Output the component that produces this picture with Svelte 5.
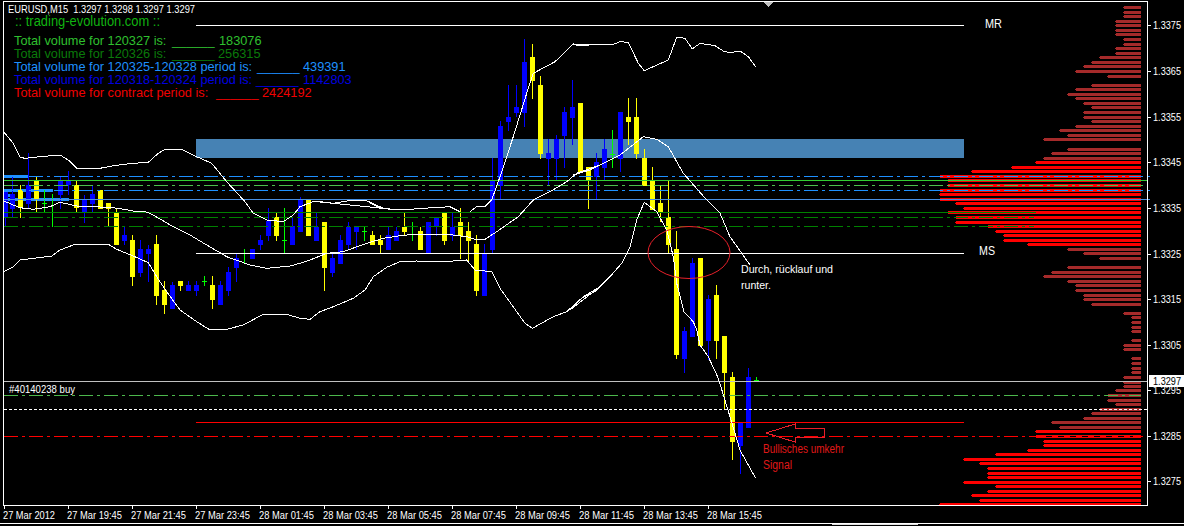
<script>
  // Candle rows: centre x, colour (b/y/g), wick top, wick bottom, body top, body bottom. Real pixels.
  const z2 = (x, c, wt, wb, bt, bb) => [x, c, 130 + wt / 3, 130 + wb / 3, bt == null ? null : 130 + bt / 3, bb == null ? null : 130 + bb / 3];
  const z3 = (x, c, wt, wb, bt, bb) => [x, c, 30 + wt / 3, 30 + wb / 3, bt == null ? null : 30 + bt / 3, bb == null ? null : 30 + bb / 3];

  const raw = [
    z2(5, 'b', 185, 290, 185, 260), z2(12, 'b', 140, 262, 192, 237), z2(20, 'y', 166, 263, 181, 235), z2(28, 'b', 70, 238, 166, 221),
    z2(36, 'y', 140, 245, 153, 208), z2(44, 'g', 180, 245, 219, 219), z2(52, 'g', 192, 290, null, null), z2(60, 'b', 140, 237, 154, 195),
    z2(68, 'b', 123, 195, 153, 166), z2(76, 'y', 153, 245, 166, 235), z2(84, 'b', 195, 278, 208, 245), z2(92, 'b', 166, 245, 192, 221),
    z2(100, 'y', 181, 236, 181, 236), z2(108, 'y', 219, 288, 219, 236), z2(116, 'y', 235, 345, 249, 345), z2(124, 'b', 292, 346, 316, 333),
    z2(132, 'y', 316, 467, 330, 440), z2(140, 'b', 330, 440, 358, 430), z2(148, 'b', 345, 455, 358, 372), z2(156, 'y', 316, 525, 342, 497),
    z2(164, 'y', 453, 551, 480, 525), z2(172, 'b', 455, 537, 465, 537), z2(180, 'y', 453, 483, 453, 468), z2(188, 'b', 453, 484, 465, 484),
    z2(196, 'b', 453, 497, 465, 484), z2(204, 'g', 438, 468, 453, 453), z2(212, 'y', 438, 537, 465, 510), z2(220, 'b', 453, 525, 465, 525),
    z2(228, 'b', 411, 497, 427, 484), z2(236, 'b', 373, 455, 385, 414), z2(244, 'g', 358, 400, null, null), z2(252, 'b', 358, 387, 358, 387),
    z2(260, 'b', 316, 360, 330, 345), z2(268, 'b', 235, 332, 273, 317), z2(276, 'y', 250, 332, 262, 318), z2(284, 'g', 235, 370, 331, 331),
    z2(292, 'b', 262, 345, 288, 345),
    z3(300, 'b', 500, 606, 510, 605), z3(308, 'y', 510, 617, 510, 617), z3(316, 'b', 550, 633, 590, 633), z3(324, 'y', 576, 782, 576, 713),
    z3(332, 'b', 673, 740, 684, 728), z3(340, 'b', 615, 701, 630, 701), z3(348, 'b', 576, 660, 590, 645), z3(356, 'b', 590, 660, 590, 605),
    z3(364, 'g', 590, 633, 604, 604), z3(372, 'y', 603, 645, 616, 645), z3(380, 'y', 616, 668, 630, 645), z3(388, 'b', 590, 660, 616, 660),
    z3(396, 'b', 590, 633, 604, 633), z3(404, 'y', 549, 615, 590, 605), z3(412, 'g', 576, 633, null, null), z3(420, 'y', 590, 660, 603, 660),
    z3(428, 'b', 576, 670, 576, 670), z3(436, 'b', 562, 617, 562, 590), z3(444, 'y', 549, 645, 549, 633), z3(452, 'b', 549, 633, 590, 617),
    z3(460, 'y', 534, 687, 576, 618), z3(468, 'y', 576, 700, 603, 633), z3(476, 'y', 616, 797, 642, 783), z3(484, 'b', 642, 797, 670, 797),
    z3(492, 'b', 385, 670, 453, 660), z3(500, 'b', 273, 507, 288, 467), z3(508, 'b', 165, 303, 262, 275), z3(516, 'b', 165, 260, 232, 250),
    z3(524, 'b', 28, 290, 96, 249), z3(532, 'y', 42, 207, 81, 153), z3(540, 'y', 138, 386, 165, 372), z3(548, 'b', 327, 467, 370, 387),
    z3(556, 'b', 315, 450, 327, 387), z3(564, 'b', 232, 414, 246, 318), z3(572, 'b', 150, 345, 232, 264), z3(580, 'y', 219, 425, 219, 425),
    z3(588, 'y', 411, 537, 411, 450), z3(596, 'b', 370, 507, 396, 440), z3(604, 'b', 327, 450, 357, 414), z3(612, 'g', 300, 414, 372, 372),
    z3(620, 'b', 246, 425, 246, 388), z3(628, 'y', 205, 345, 262, 276), z3(636, 'y', 205, 387, 262, 372), z3(644, 'y', 358, 467, 384, 467),
    z3(652, 'y', 411, 540, 453, 540), z3(660, 'y', 465, 575, 519, 546), z3(668, 'y', 453, 670, 562, 645),
    [676, 'y', 231, 359, 249, 355], [684, 'b', 327, 373, 331, 359], [692, 'b', 258, 337, 263, 337], [700, 'y', 258, 346, 258, 346],
    [708, 'b', 295, 360, 299, 341], [716, 'y', 285, 359, 295, 341], [724, 'y', 336, 410, 336, 373], [732, 'y', 372, 460, 377, 442],
    [740, 'b', 423, 474, 423, 446], [748, 'b', 368, 428, 377, 428], [756, 'g', 377, 381, 380, 380]
  ];
  const colors = { b: '#0000ff', y: '#ffff00', g: '#00ff00' };
  const candles = raw.map(([x, c, wt, wb, bt, bb]) => ({
    x, fill: colors[c], cross: c === 'g',
    wt: Math.round(wt), wh: Math.round(wb) - Math.round(wt),
    bt: bt == null ? 0 : Math.round(bt), bh: bt == null ? 0 : Math.max(Math.round(bb) - Math.round(bt), 1),
    hasBody: bt != null
  }));

  // Bollinger lines, written as crop coordinates and mapped to real pixels.
  const map = (ox, oy, pts) => pts.map(([x, y]) => [ox + x / 3, oy + y / 3]);
  const poly = (...s) => s.flat().map((p) => p[0].toFixed(1) + ',' + p[1].toFixed(1)).join(' ');

  const upper = poly(
    map(0, 0, [[12, 397], [40, 430], [60, 472], [75, 475], [120, 470], [180, 465], [205, 480], [230, 505], [300, 505], [340, 497], [400, 490], [445, 487], [475, 460], [495, 448], [545, 448], [590, 470], [635, 490], [680, 545], [735, 605], [760, 640], [800, 660], [850, 665], [880, 645], [900, 620], [945, 603], [1000, 610], [1060, 600], [1095, 600], [1150, 625], [1200, 630]]),
    map(300, 30, [[50, 515], [100, 520], [160, 510], [195, 510], [240, 535], [300, 540], [370, 535], [450, 530], [480, 545]])
  );
  const upper2 = poly(
    map(300, 30, [[510, 545], [530, 530], [555, 530], [575, 510], [600, 440], [640, 320], [680, 190], [700, 130], [765, 95], [820, 42], [900, 45]]),
    map(560, 30, [[35, 43], [55, 46], [160, 43], [180, 35], [205, 37], [235, 100], [253, 122], [325, 90], [350, 22], [375, 25], [397, 57], [420, 40], [465, 47], [490, 63], [510, 68], [540, 63], [565, 80], [587, 110]])
  );
  const middle = poly(
    map(0, 130, [[12, 213], [40, 225], [60, 233], [100, 238], [150, 230], [180, 217], [230, 228], [320, 232], [355, 235], [400, 243], [435, 245], [450, 250], [520, 290], [570, 315], [620, 345], [680, 380], [750, 405], [800, 415], [870, 408], [900, 400]]),
    map(300, 30, [[30, 690], [80, 670], [130, 665], [200, 640], [250, 625], [300, 617], [340, 613], [440, 613], [500, 620], [530, 630], [555, 628], [590, 605], [655, 560], [700, 510], [750, 485], [800, 455], [830, 430], [900, 405]]),
    map(560, 30, [[40, 435], [90, 420], [130, 400], [180, 375], [250, 320], [290, 328], [325, 350], [370, 430], [440, 510], [480, 550], [510, 620], [570, 705]])
  );
  const lower = poly(
    map(0, 130, [[12, 425], [40, 410], [60, 390], [100, 385], [155, 378], [180, 360], [225, 343], [325, 343], [350, 358], [400, 378], [445, 398], [470, 440], [500, 485], [540, 540], [590, 575], [630, 600], [680, 598], [730, 585], [790, 553], [860, 553], [900, 565]]),
    map(300, 30, [[30, 868], [60, 845], [100, 830], [160, 805], [195, 780], [220, 740], [260, 712], [300, 695], [350, 693], [430, 695], [500, 690], [525, 720], [575, 725], [600, 775], [650, 845], [675, 880], [697, 895], [760, 860], [800, 845], [850, 800], [900, 770]]),
    map(560, 30, [[30, 840], [65, 805], [105, 785], [150, 740], [185, 700], [210, 650], [230, 570], [253, 517], [290, 545], [320, 600], [340, 680], [350, 760], [372, 845], [400, 875], [410, 900]]),
    map(640, 320, [[180, 75], [205, 110], [235, 175], [270, 290], [300, 390], [347, 475]])
  );

  // Volume profile rows: crop y, crop left edge, red or brown.
  const row = (oy, list, hot) => list.map(([y, l]) => ({ y: Math.round(oy + y / 3), x: 940 + l / 3, hot }));
  const bars = [
    ...row(0, [[22, 552], [37, 552], [49, 552], [64, 528], [76, 528], [91, 528], [103, 528], [118, 552], [133, 552], [145, 528], [160, 528], [172, 480], [187, 456], [199, 432], [214, 408], [229, 504], [256, 456], [268, 408], [283, 384], [295, 408], [310, 432], [322, 456], [337, 432], [352, 432], [364, 456], [379, 408], [391, 360], [406, 384], [418, 312], [448, 384], [460, 336], [475, 312]], false),
    ...row(0, [[487, 288], [502, 216], [514, 96]], true),
    ...row(170, [[19, 0], [31, 24], [46, 24], [61, 0], [73, 0], [88, 0], [100, 48], [115, 72], [127, 24], [142, 48], [157, 48], [169, 144], [184, 168], [196, 192], [211, 192], [223, 264]], true),
    ...row(170, [[238, 384], [250, 432], [265, 480], [292, 384], [307, 336], [319, 312], [334, 384], [346, 408], [361, 408], [376, 432], [388, 432], [403, 456], [430, 552], [442, 576], [457, 576], [472, 576], [484, 576], [511, 576], [526, 552], [538, 552]], false),
    ...row(346, [[37, 576], [52, 576], [67, 576], [79, 576], [94, 552], [109, 552], [121, 552], [133, 528], [148, 504], [163, 504], [175, 528], [190, 480], [202, 456], [217, 432], [229, 336], [244, 360]], false),
    ...row(346, [[256, 288], [271, 288], [286, 312], [298, 312], [313, 264], [325, 168], [340, 72], [352, 120], [367, 144], [382, 144], [394, 144], [409, 72], [421, 168], [436, 144], [448, 96], [463, 120], [475, 0]], true)
  ];

  const levels = [
    { y: 176, x2: 1150, c: '#1e90ff', dash: '14 4 3 4' },
    { y: 180, x2: 1147, c: '#32cd32', dash: '' },
    { y: 185, x2: 1147, c: '#4cc04c', dash: '14 4 3 4' },
    { y: 190, x2: 1150, c: '#1e90ff', dash: '14 4 3 4' },
    { y: 199, x2: 1150, c: '#4a90e2', dash: '' },
    { y: 212, x2: 1036, c: '#008000', dash: '' },
    { y: 217, x2: 1034, c: '#008000', dash: '14 4 3 4' },
    { y: 226, x2: 1034, c: '#008000', dash: '14 4 3 4' },
    { y: 381, x2: 1147, c: '#c0c0c0', dash: '' },
    { y: 395, x2: 1141, c: '#4cb84c', dash: '14 4 3 4' },
    { y: 409, x2: 1147, c: '#ffffff', dash: '3 2' },
    { y: 436, x2: 1147, c: '#ff0000', dash: '14 4 3 4' }
  ];

  const prices = [
    ['1.3375', 25], ['1.3365', 71], ['1.3355', 117], ['1.3345', 162], ['1.3335', 208], ['1.3325', 254],
    ['1.3315', 299], ['1.3305', 345], ['1.3295', 390], ['1.3285', 436], ['1.3275', 481]
  ];
  const times = [
    ['27 Mar 2012', 4, 52], ['27 Mar 19:45', 68, 55], ['27 Mar 21:45', 132, 55], ['27 Mar 23:45', 196, 55], ['28 Mar 01:45', 260, 55], ['28 Mar 03:45', 324, 55],
    ['28 Mar 05:45', 388, 55], ['28 Mar 07:45', 452, 55], ['28 Mar 09:45', 516, 55], ['28 Mar 11:45', 580, 55], ['28 Mar 13:45', 644, 55], ['28 Mar 15:45', 708, 55]
  ];
  const stats = [
    { y: 45, c: '#2fc02f', t: 'Total volume for 120327 is:', u: 172, v: 219, val: '183076' },
    { y: 58, c: '#0a7a0a', t: 'Total volume for 120326 is:', u: 172, v: 218, val: '256315' },
    { y: 71, c: '#1e90ff', t: 'Total volume for 120325-120328 period is:', u: 257, v: 303, val: '439391' },
    { y: 84, c: '#0000e0', t: 'Total volume for 120318-120324 period is:', u: 256, v: 303, val: '1142803' },
    { y: 97, c: '#f00000', t: 'Total volume for contract period is:', u: 216, v: 262, val: '2424192' }
  ];
</script>

<div class="chart">
  <svg width="1184" height="526" viewBox="0 0 1184 526" xmlns="http://www.w3.org/2000/svg">
    <rect class="zone" x="196" y="139" width="768" height="19" />

    {#each bars as b}
      <rect x={Math.round(b.x)} y={b.y - 1} width={1141 - Math.round(b.x)} height="3" fill={b.hot ? '#ff0000' : '#a52a2a'} />
      <rect x={Math.round(b.x) - 1} y={b.y} width="2" height="1" fill={b.hot ? '#ff0000' : '#a52a2a'} />
    {/each}

    <rect class="stripe" x="4" y="175" width="24" height="3" />
    <rect class="stripe" x="4" y="189" width="49" height="3" />
    <rect class="stripe" x="4" y="194" width="6" height="3" />
    <rect class="stripe" x="4" y="198" width="65" height="3" />

    {#each candles as c}
      <rect x={c.x} y={c.wt} width="1" height={c.wh} fill={c.fill} />
      {#if c.hasBody}
        {#if c.cross}
          <rect x={c.x - 2} y={c.bt} width="5" height="1" fill={c.fill} />
        {:else}
          <rect x={c.x - 2} y={c.bt} width="5" height={c.bh} fill={c.fill} />
        {/if}
      {/if}
    {/each}

    {#each levels as l}
      <line x1="4" x2={l.x2} y1={l.y + 0.5} y2={l.y + 0.5} stroke={l.c} stroke-dasharray={l.dash} />
    {/each}
    <line class="overlap" x1="1046" x2="1133" y1="436.5" y2="436.5" />

    <line class="rule white" x1="196" x2="964" y1="25.5" y2="25.5" />
    <line class="rule white" x1="196" x2="964" y1="253.5" y2="253.5" />
    <line class="rule red" x1="196" x2="964" y1="422.5" y2="422.5" />

    <polyline class="band" points={upper} />
    <polyline class="band" points={upper2} />
    <polyline class="band" points={middle} />
    <polyline class="band" points={lower} />

    <ellipse class="mark" cx="689" cy="252.5" rx="41" ry="26" />
    <polygon class="mark" points="766,433 795,424 795,428 824,428 824,437 795,437 795,442" />

    <text class="legend" x="8" y="13" textLength="187" lengthAdjust="spacingAndGlyphs">EURUSD,M15&#160; 1.3297 1.3298 1.3297 1.3297</text>
    <text class="brand" x="15" y="26" textLength="145" lengthAdjust="spacingAndGlyphs">:: trading-evolution.com ::</text>
    {#each stats as s}
      <text class="stat" x="14" y={s.y} fill={s.c}>{s.t}</text>
      <text class="stat" x={s.u} y={s.y} fill={s.c}>______</text>
      <text class="stat" x={s.v} y={s.y} fill={s.c}>{s.val}</text>
    {/each}

    <text class="note big" x="985" y="28" textLength="17" lengthAdjust="spacingAndGlyphs">MR</text>
    <text class="note big" x="979" y="255" textLength="16" lengthAdjust="spacingAndGlyphs">MS</text>
    <text class="note small" x="741" y="273" textLength="92" lengthAdjust="spacingAndGlyphs">Durch, rücklauf und</text>
    <text class="note small" x="741" y="289" textLength="30" lengthAdjust="spacingAndGlyphs">runter.</text>
    <text class="red-note" x="763" y="453" textLength="81" lengthAdjust="spacingAndGlyphs">Bullisches umkehr</text>
    <text class="red-note" x="763" y="469" textLength="29" lengthAdjust="spacingAndGlyphs">Signal</text>
    <text class="legend" x="9" y="393" textLength="66" lengthAdjust="spacingAndGlyphs">#40140238 buy</text>

    <!-- frame and axes -->
    <line class="rule white" x1="3" x2="1148" y1="1.5" y2="1.5" />
    <line class="rule white" x1="3.5" x2="3.5" y1="1" y2="506" />
    <line class="rule white" x1="1147.5" x2="1147.5" y1="1" y2="506" />
    <line class="rule white" x1="3" x2="1148" y1="505.5" y2="505.5" />
    <polygon class="shift" points="764,2 773,2 768.5,7" />

    {#each prices as [t, y]}
      <line class="rule white" x1="1148" x2="1151" y1={y + 0.5} y2={y + 0.5} />
      <text class="axis" x="1153" y={y + 4} textLength="28" lengthAdjust="spacingAndGlyphs">{t}</text>
    {/each}
    <rect class="quote" x="1149" y="375" width="35" height="12" />
    <text class="axis dark" x="1153" y="385" textLength="28" lengthAdjust="spacingAndGlyphs">1.3297</text>

    {#each times as [t, x, w]}
      <line class="rule white" x1={x + 0.5} x2={x + 0.5} y1="506" y2="509" />
      <text class="axis" x={x - 1} y="519" textLength={w} lengthAdjust="spacingAndGlyphs">{t}</text>
    {/each}

    <line class="rule white" x1="0" x2="1184" y1="523.5" y2="523.5" />
    <line class="rule grey" x1="832" x2="918" y1="524.5" y2="524.5" />
  </svg>
</div>

<style>
  :global(body) {
    margin: 0;
    background: #000;
  }
  .chart {
    width: 1184px;
    height: 526px;
    overflow: hidden;
    background: #000;
  }
  svg {
    display: block;
    font-family: "Liberation Sans", Arial, sans-serif;
  }
  rect,
  line,
  polyline,
  polygon {
    shape-rendering: crispEdges;
  }
  .zone {
    fill: #4682b4;
  }
  .stripe {
    fill: #1e90ff;
  }
  .overlap {
    stroke: #000;
    stroke-dasharray: 6 6;
  }
  .rule {
    stroke-width: 1;
  }
  .white {
    stroke: #fff;
  }
  .red {
    stroke: #ff0000;
  }
  .grey {
    stroke: #e0e0e0;
  }
  .band {
    fill: none;
    stroke: #fff;
    stroke-width: 1;
  }
  .mark {
    fill: none;
    stroke: #e8202a;
    stroke-width: 1;
  }
  .shift {
    fill: #c0c0c0;
  }
  .legend {
    fill: #fff;
    font-size: 11px;
  }
  .brand {
    fill: #11b311;
    font-size: 14px;
  }
  .stat {
    font-size: 12.75px;
  }
  .note {
    fill: #fff;
  }
  .big {
    font-size: 13px;
  }
  .small {
    font-size: 11.5px;
  }
  .red-note {
    fill: #e01818;
    font-size: 12px;
  }
  .axis {
    fill: #fff;
    font-size: 10.5px;
  }
  .dark {
    fill: #000;
  }
  .quote {
    fill: #fff;
  }
</style>
